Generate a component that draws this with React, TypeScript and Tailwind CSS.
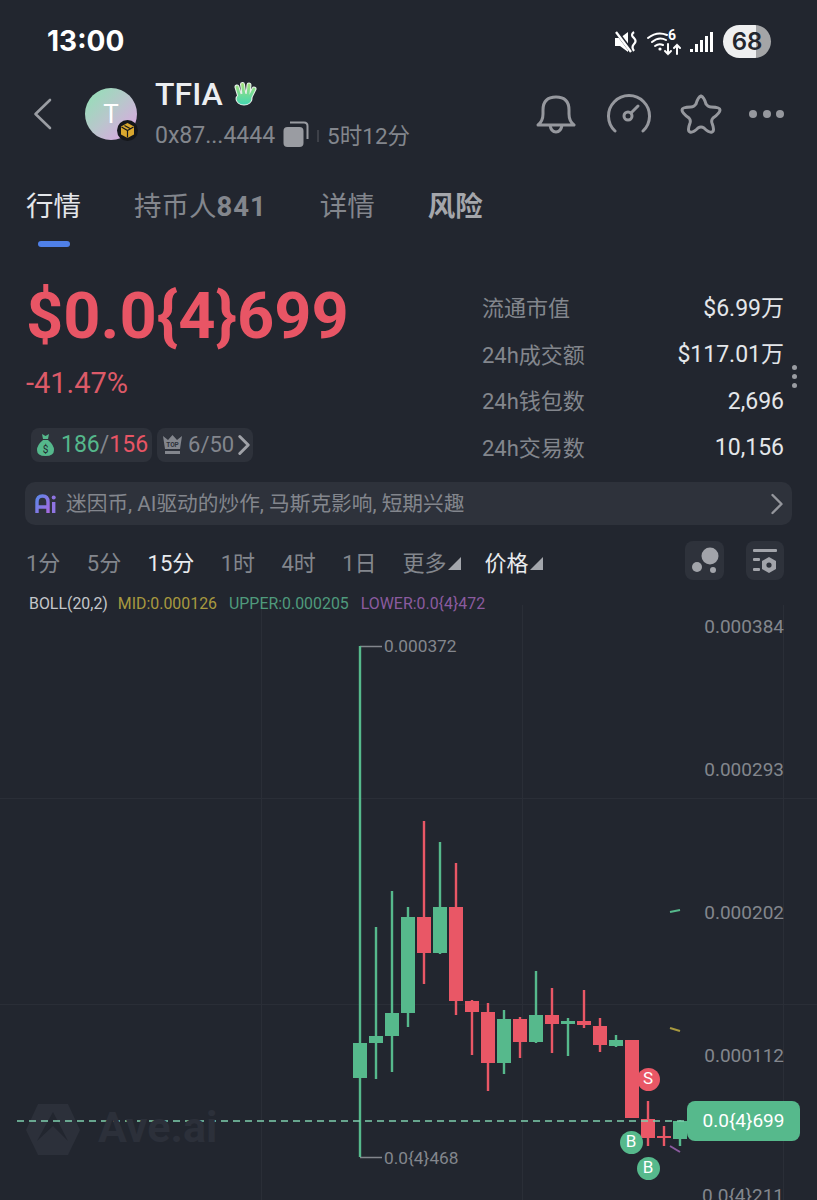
import { ChevronRight } from "lucide-react";

const cjk = "font-['Roboto','Noto_Sans_CJK_SC',sans-serif]";

type Candle = [number, number, number, number, number, "g" | "r"];

// x, wick top, wick bottom, body top, body bottom
const candles: Candle[] = [
	[360, 646, 1157, 1043, 1078, "g"],
	[376, 927, 1079, 1036, 1043, "g"],
	[392, 891, 1072, 1013, 1036, "g"],
	[408, 907, 1027, 917, 1013, "g"],
	[424, 821, 984, 917, 953, "r"],
	[440, 842, 954, 907, 953, "g"],
	[456, 863, 1015, 907, 1001, "r"],
	[472, 1000, 1055, 1001, 1012, "r"],
	[488, 1003, 1091, 1012, 1063, "r"],
	[504, 1010, 1074, 1019, 1063, "g"],
	[520, 1017, 1058, 1019, 1042, "r"],
	[536, 971, 1043, 1015, 1042, "g"],
	[552, 988, 1053, 1015, 1024, "r"],
	[568, 1018, 1056, 1021, 1024, "g"],
	[584, 990, 1028, 1021, 1025, "r"],
	[600, 1018, 1052, 1026, 1045, "r"],
	[616, 1035, 1047, 1040, 1046, "g"],
	[632, 1040, 1118, 1040, 1118, "r"],
	[648, 1101, 1146, 1119, 1138, "r"],
	[664, 1126, 1146, 1136, 1137, "r"],
	[680, 1120, 1146, 1121, 1139, "g"],
];

const stats = [
	["流通市值", "$6.99万"],
	["24h成交额", "$117.01万"],
	["24h钱包数", "2,696"],
	["24h交易数", "10,156"],
];

const intervals = [
	["1分", false],
	["5分", false],
	["15分", true],
	["1时", false],
	["4时", false],
	["1日", false],
] as const;

const axis = [
	["0.000384", 617],
	["0.000293", 760],
	["0.000202", 903],
	["0.000112", 1046],
	["0.0{4}211", 1186],
] as const;

function Corner() {
	return (
		<svg width="13" height="13" viewBox="0 0 13 13" className="mt-[10px] ml-[1px]">
			<path d="M13 0 V13 H0 Z" fill="#a3a6ac" />
		</svg>
	);
}

function StatusBar() {
	return (
		<div className="h-[82px] pl-[47px] pr-[46px] pt-[24px] flex justify-between items-start">
			<span className="text-[28px] leading-[34px] font-bold text-white font-['Inter',sans-serif]">
				13:00
			</span>
			<div className="flex items-center gap-[9px] pt-[1px]">
				<svg width="24" height="30" viewBox="0 0 24 30">
					<path d="M1 11 H6 L14 5 V25 L6 19 H1 Z" fill="#fff" />
					<path d="M2 4 L18 25" stroke="#22262f" strokeWidth="4" />
					<path d="M2 5 L17 25" stroke="#fff" strokeWidth="2.4" />
					<path d="M20 5 Q16 8 20 11 Q23 14 20 17 Q17 20 20 24" stroke="#fff" strokeWidth="2.2" fill="none" />
				</svg>
				<svg width="34" height="30" viewBox="0 0 34 30">
					<g stroke="#fff" strokeWidth="2" fill="none" strokeLinecap="round">
						<path d="M1 11 Q10 4 20 8" />
						<path d="M5 15 Q12 9 19 13" />
						<path d="M8 19 Q12 16 16 18" />
						<path d="M21 17 V27 M18 24 L21 27 L24 24" />
						<path d="M30 27 V18 M27 21 L30 18 L33 21" />
					</g>
					<circle cx="13" cy="22" r="1.6" fill="#fff" />
					<text x="21" y="13" fill="#fff" fontSize="14" fontWeight="700" fontFamily="Roboto">
						6
					</text>
				</svg>
				<svg width="23" height="24" viewBox="0 0 23 24" className="mr-[1px]">
					<rect x="0" y="19" width="3" height="3" fill="#fff" />
					<rect x="5" y="14" width="3" height="8" fill="#fff" />
					<rect x="10" y="10" width="3" height="12" fill="#fff" />
					<rect x="15" y="6" width="3" height="16" fill="#fff" />
					<rect x="20" y="2" width="3" height="20" fill="#fff" />
				</svg>
				<div className="w-[48px] h-[33px] rounded-full overflow-hidden bg-[linear-gradient(90deg,#eeeff0_68%,#a4a5a7_68%)] flex items-center justify-center">
					<span className="text-[24px] font-semibold text-[#23262d] font-['Inter',sans-serif]">
						68
					</span>
				</div>
			</div>
		</div>
	);
}

function Header() {
	return (
		<div className="h-[74px] flex items-start">
			<svg width="20" height="32" viewBox="0 0 20 32" fill="none" stroke="#9a9da3" strokeWidth="2.6" strokeLinecap="round" strokeLinejoin="round" className="ml-[33px] mt-[16px]">
				<path d="M17 2 L2.5 16 L17 30" />
			</svg>
			<div className="relative w-[52px] h-[52px] ml-[32px] mt-[6px] rounded-full bg-[linear-gradient(135deg,#8fe3b4,#b9c6cc_50%,#e3a0e6)] flex items-center justify-center text-white text-[26px] font-['Roboto',sans-serif]">
				T
				<div className="absolute right-[-1px] bottom-[-1px] w-[21px] h-[21px] rounded-full bg-[#15171b] flex items-center justify-center">
					<svg width="17" height="17" viewBox="0 0 17 17">
						<path d="M8.5 1 L15 4.5 V12.5 L8.5 16 L2 12.5 V4.5 Z" fill="#d9a72e" />
						<path d="M2.5 5 L8.5 8.5 L14.5 5 M8.5 8.5 V15.5 M5.5 3.5 L11.5 6.8" stroke="#15171b" strokeWidth="1.2" fill="none" />
					</svg>
				</div>
			</div>
			<div className="ml-[18px]">
				<div className="flex items-center h-[36px] mt-[-6px]">
					<span className="text-[32px] font-medium text-[#eceef1] font-['Roboto',sans-serif]">
						TFIA
					</span>
					<svg width="24" height="26" viewBox="0 0 24 26" className="ml-[10px]">
						<defs>
							<linearGradient id="hand" gradientUnits="userSpaceOnUse" x1="0" y1="2" x2="0" y2="25">
								<stop offset="0" stopColor="#a4e07a" />
								<stop offset="1" stopColor="#3ed6b4" />
							</linearGradient>
						</defs>
						<g stroke="#e6efe9" strokeWidth="5" strokeLinecap="round" fill="none">
							<path d="M7 16 L4 6 M11 14 L9.5 3.5 M15 14 L16 4 M17 16 L21 8" />
						</g>
						<ellipse cx="11" cy="18" rx="8.5" ry="6.5" fill="#e6efe9" />
						<g stroke="url(#hand)" strokeWidth="2.8" strokeLinecap="round" fill="none">
							<path d="M7 16 L4 6 M11 14 L9.5 3.5 M15 14 L16 4 M17 16 L21 8" />
						</g>
						<ellipse cx="11" cy="18" rx="7.4" ry="5.6" fill="url(#hand)" />
					</svg>
				</div>
				<div className={`flex items-center mt-[9px] text-[23px] leading-[30px] text-[#83868d] ${cjk}`}>
					<span>0x87...4444</span>
					<svg width="26" height="26" viewBox="0 0 26 26" className="ml-[8px] -mt-[4px]">
						<rect x="0.5" y="6" width="20" height="20" rx="4" fill="#9a9ca2" />
						<path d="M7 1.5 H21 Q24.5 1.5 24.5 5 V18" stroke="#9a9ca2" strokeWidth="2" fill="none" />
					</svg>
					<span className="w-[2px] h-[12px] bg-[#3d4048] ml-[8px]" />
					<span className="ml-[8px] text-[22.5px]">5时12分</span>
				</div>
			</div>
			<div className="ml-auto flex items-center text-[#96989e] mr-[33px] mt-[12px]">
				<svg width="40" height="40" viewBox="0 0 40 40" fill="none" stroke="currentColor" strokeWidth="3" strokeLinejoin="round">
					<path d="M2 31 Q7 27 7 20 V16 Q7 3 20 3 Q33 3 33 16 V20 Q33 27 38 31 Z" />
					<path d="M14 31 Q15 38 20 38 Q25 38 26 31" />
				</svg>
				<svg width="44" height="40" viewBox="0 0 44 40" fill="none" stroke="currentColor" strokeWidth="3" strokeLinecap="round" className="ml-[31px]">
					<path d="M8 37 A20.5 20.5 0 1 1 36 37" />
					<circle cx="21" cy="22" r="4" />
					<path d="M24 19 L31 12" />
				</svg>
				<svg width="42" height="40" viewBox="0 0 42 40" fill="none" stroke="currentColor" strokeWidth="3" strokeLinejoin="round" className="ml-[29px]">
					<path d="M21 2 Q24 3 26 10 Q28 13 31 13 Q40 13 40 16 Q40 19 33 24 Q31 26 32 29 Q35 37 32 38 Q29 39 24 34 Q21 32 18 34 Q13 39 10 38 Q7 37 10 29 Q11 26 9 24 Q2 19 2 16 Q2 13 11 13 Q14 13 16 10 Q18 3 21 2 Z" />
				</svg>
				<div className="flex gap-[5.5px] ml-[27px]">
					<span className="w-[8px] h-[8px] rounded-full bg-current" />
					<span className="w-[8px] h-[8px] rounded-full bg-current" />
					<span className="w-[8px] h-[8px] rounded-full bg-current" />
				</div>
			</div>
		</div>
	);
}

function Tabs() {
	return (
		<div className={`relative h-[95px] pl-[26px] pt-[28px] flex items-start text-[27.5px] leading-[46px] text-[#83868d] ${cjk}`}>
			<span className="text-[#e4e6ea]">行情</span>
			<span className="ml-[53px]">
				持币人<span className="font-bold tracking-[1px]">841</span>
			</span>
			<span className="ml-[53px]">详情</span>
			<span className="ml-[53px] font-bold text-[#a4a6ab]">风险</span>
			<div className="absolute left-[38px] top-[85px] w-[32px] h-[6px] rounded-full bg-[#4f80e8]" />
		</div>
	);
}

function Summary() {
	return (
		<div className="h-[231px] pl-[26px] pr-[33px] flex justify-between relative">
			<div>
				<div className="text-[#e85565] text-[65px] leading-[70px] font-bold font-['Roboto',sans-serif] mt-[30px] whitespace-nowrap">
					$0.0{"{4}"}699
				</div>
				<div className="text-[#dc5a68] text-[29px] leading-[30px] mt-[17px] font-['Roboto',sans-serif]">
					-41.47%
				</div>
				<div className={`flex gap-[5px] ml-[5px] mt-[30px] text-[23px] leading-[34px] ${cjk}`}>
					<div className="h-[34px] pl-[5px] pr-[4px] rounded-[8px] bg-[#2e323b] flex items-center">
						<svg width="19" height="24" viewBox="0 0 19 24" className="mr-[6px]">
							<path d="M6 1 L9.5 3 L13 1 L12 6 H7 Z" fill="#55b88c" />
							<path d="M7 7 H12 Q18 12 18 17 Q18 23 9.5 23 Q1 23 1 17 Q1 12 7 7 Z" fill="#55b88c" />
							<text x="9.5" y="20" textAnchor="middle" fontSize="10" fill="#22262f" fontFamily="Roboto">
								$
							</text>
						</svg>
						<span className="text-[#55b88c]">186</span>
						<span className="text-[#83868d]">/</span>
						<span className="text-[#e85565]">156</span>
					</div>
					<div className="h-[34px] pl-[5px] rounded-[8px] bg-[#2e323b] flex items-center text-[22px] text-[#83868d]">
						<svg width="21" height="22" viewBox="0 0 21 22" className="mr-[5px]">
							<path d="M1 2 L6 6 L10.5 1 L15 6 L20 2 L18 15 H3 Z" fill="#83868d" />
							<rect x="3" y="17" width="15" height="3" fill="#83868d" />
							<text x="10.5" y="13" textAnchor="middle" fontSize="6.5" fill="#2e323b" fontFamily="Roboto" fontWeight="700">
								TOP
							</text>
						</svg>
						<span>6/50</span>
						<ChevronRight size={34} strokeWidth={2.1} className="text-[#a0a2a8] -ml-[7px] -mr-[8px]" />
					</div>
				</div>
			</div>
			<div className={`w-[302px] pt-[34.5px] text-[22px] ${cjk}`}>
				{stats.map(([label, value]) => (
					<div key={label} className="h-[46.6px] flex justify-between items-center">
						<span className="text-[#83868d]">{label}</span>
						<span className="text-[#e4e6ea] text-[23px]">{value}</span>
					</div>
				))}
			</div>
			<div className="absolute right-[20px] top-[114px] flex flex-col gap-[4px]">
				<span className="w-[5px] h-[5px] rounded-full bg-[#9a9ca2]" />
				<span className="w-[5px] h-[5px] rounded-full bg-[#9a9ca2]" />
				<span className="w-[5px] h-[5px] rounded-full bg-[#9a9ca2]" />
			</div>
		</div>
	);
}

function AiBar() {
	return (
		<div className={`mx-[25px] h-[43px] rounded-[10px] bg-[#2e323b] flex items-center pl-[10px] text-[20.7px] text-[#83868d] ${cjk}`}>
			<svg width="22" height="20" viewBox="0 0 22 20">
				<defs>
					<linearGradient id="ai" x1="0" y1="0" x2="1" y2="1">
						<stop offset="0" stopColor="#5d86e8" />
						<stop offset="1" stopColor="#a56be0" />
					</linearGradient>
				</defs>
				<path d="M2 19 V8 Q2 2 7.5 2 Q13 2 13 8 V19 M2 13 H13" stroke="url(#ai)" strokeWidth="3.4" fill="none" />
				<rect x="17" y="8" width="3.4" height="11" fill="#8f74e2" />
				<circle cx="18.7" cy="3.5" r="2" fill="#8f74e2" />
			</svg>
			<span className="ml-[9px] mt-[2px]">迷因币, AI驱动的炒作, 马斯克影响, 短期兴趣</span>
			<ChevronRight size={36} strokeWidth={1.6} className="ml-auto -mr-[3px] text-[#94969c]" />
		</div>
	);
}

function Toolbar() {
	return (
		<div className={`h-[70px] pl-[26px] pr-[33px] flex items-center text-[22px] text-[#83868d] ${cjk}`}>
			<div className="flex gap-[26.4px] mt-[6px]">
				{intervals.map(([label, active]) => (
					<span key={label} className={active ? "text-[#e9ebee]" : ""}>
						{label}
					</span>
				))}
			</div>
			<div className="flex ml-[26px] mt-[6px]">
				<span>更多</span>
				<Corner />
			</div>
			<div className="flex ml-[24px] mt-[6px] text-[#e9ebee]">
				<span>价格</span>
				<Corner />
			</div>
			<div className="ml-auto flex gap-[22px]">
				<div className="w-[39px] h-[39px] rounded-[8px] bg-[#2e323b]">
					<svg width="39" height="39" viewBox="0 0 39 39" fill="#a2a4aa">
						<circle cx="25" cy="15" r="8.5" />
						<circle cx="12" cy="26" r="5" />
						<circle cx="28" cy="29" r="3" />
					</svg>
				</div>
				<div className="w-[38px] h-[39px] rounded-[8px] bg-[#2e323b]">
					<svg width="38" height="39" viewBox="0 0 38 39" fill="#a2a4aa">
						<rect x="7" y="8" width="24" height="3" rx="1" />
						<rect x="7" y="17" width="7" height="3" rx="1" />
						<rect x="7" y="27" width="7" height="3" rx="1" />
						<path
							d="M23 16 L30 20 V28 L23 32 L16 28 V20 Z M23 21.5 A2.6 2.6 0 1 0 23 26.7 A2.6 2.6 0 1 0 23 21.5 Z"
							fillRule="evenodd"
						/>
					</svg>
				</div>
			</div>
		</div>
	);
}

function Chart() {
	return (
		<div className="relative flex-1 overflow-hidden text-[19px] text-[#83868d] font-['Roboto',sans-serif]">
			<svg className="absolute left-0 top-0" width="817" height="605" viewBox="0 595 817 605">
				<g stroke="#2a2e37" strokeWidth="1">
					<path d="M261.5 605 V1200 M522.5 605 V1200 M783.5 605 V1200" />
					<path d="M0 798.5 H817 M0 1004.5 H817" />
				</g>
				<path d="M38 1104 H68 L80 1130 L68 1155 H38 L26 1130 Z" fill="#2c303a" />
				<path d="M53 1112 L68 1141 L53 1126 L37 1141 Z" fill="#22262f" />
				<path d="M360 646.5 H382 M360 1157.5 H382" stroke="#83868d" strokeWidth="1.5" />
				{candles.map(([x, wt, wb, bt, bb, c]) => {
					const color = c === "g" ? "#56b98c" : "#e95766";
					return (
						<g key={x}>
							<rect x={x - 1.2} y={wt} width="2.4" height={wb - wt} fill={color} />
							<rect x={x - 7} y={bt} width="14" height={Math.max(bb - bt, 2)} fill={color} />
						</g>
					);
				})}
				<path d="M17 1121 H690" stroke="#7fd0ae" strokeWidth="1.6" strokeDasharray="7 5" />
				<path d="M670 912 L680 910" stroke="#56b98c" strokeWidth="2" />
				<path d="M670 1028 L680 1031" stroke="#a8993f" strokeWidth="2" />
				<path d="M670 1146 L680 1152" stroke="#8b5b9f" strokeWidth="2" />
			</svg>
			<div className="absolute left-[29px] top-[1px] flex gap-[12px] text-[15.9px] leading-[16px] whitespace-nowrap">
				<span className="text-[#c4c6ca] -mr-[2px]">BOLL(20,2)</span>
				<span className="text-[#a8993f]">MID:0.000126</span>
				<span className="text-[#4f9a7c]">UPPER:0.000205</span>
				<span className="text-[#8b5b9f]">LOWER:0.0{"{4}"}472</span>
			</div>
			<span className="absolute left-[98px] top-[508px] text-[43px] leading-[48px] font-bold text-[#2c303a]">
				Ave.ai
			</span>
			<span className="absolute left-[384px] top-[40px] text-[17.3px] leading-[22px]">0.000372</span>
			<span className="absolute left-[384px] top-[552px] text-[17.3px] leading-[22px]">0.0{"{4}"}468</span>
			{axis.map(([label, y]) => (
				<span key={label} className="absolute right-[33px] leading-[20px]" style={{ top: y - 595 }}>
					{label}
				</span>
			))}
			<div className="absolute left-[687px] top-[506px] w-[113px] h-[40px] rounded-[8px] bg-[#56b98c] flex items-center justify-center text-[19px] text-white">
				0.0{"{4}"}699
			</div>
			<Marker label="S" x={648} y={1079} color="bg-[#e95766]" />
			<Marker label="B" x={631} y={1142} color="bg-[#56b98c]" />
			<Marker label="B" x={648} y={1168} color="bg-[#56b98c]" />
		</div>
	);
}

function Marker({ label, x, y, color }: { label: string; x: number; y: number; color: string }) {
	return (
		<div
			className={`absolute w-[23px] h-[23px] rounded-full flex items-center justify-center text-[17px] text-white ${color}`}
			style={{ left: x - 11.5, top: y - 595 - 11.5 }}
		>
			{label}
		</div>
	);
}

export default function App() {
	return (
		<div className="w-[817px] h-[1200px] bg-[#22262f] flex flex-col overflow-hidden">
			<StatusBar />
			<Header />
			<Tabs />
			<Summary />
			<AiBar />
			<Toolbar />
			<Chart />
		</div>
	);
}
